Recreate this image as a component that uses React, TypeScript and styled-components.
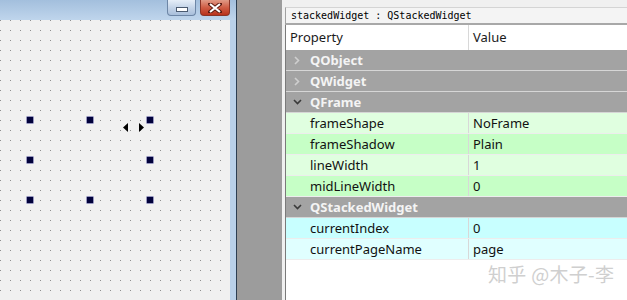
import React, { ReactElement } from "react"
import styled, { createGlobalStyle } from "styled-components"

const GlobalStyle = createGlobalStyle`
  html, body {
    margin: 0;
    padding: 0;
    width: 627px;
    height: 300px;
    overflow: hidden;
    background: #f0f0f0;
  }
  #root {
    width: 627px;
    height: 300px;
  }
`

const Screen = styled.div`
  display: flex;
  flex-flow: row nowrap;
  width: 627px;
  height: 300px;
  font-family: "Noto Sans", "Open Sans", sans-serif;
`

// ---- designer form window ----

const FormWindow = styled.div`
  display: flex;
  flex-direction: column;
  width: 236px;
  border-right: 1px solid #2c3e52;
  background: #b9d1ea;
`

const TitleBar = styled.div`
  display: flex;
  justify-content: flex-end;
  align-items: flex-start;
  gap: 4px;
  height: 20px;
  padding-right: 6px;
  background: linear-gradient(#a3bfdd, #bfd5ec);
`

const CaptionButton = styled.div<{ $close?: boolean }>`
  width: ${(p) => (p.$close ? 30 : 29)}px;
  height: 16px;
  box-sizing: border-box;
  border: 1px solid ${(p) => (p.$close ? "#8a3426" : "#6d86a6")};
  border-top: none;
  border-radius: 0 0 4px 4px;
  background: ${(p) =>
    p.$close
      ? "linear-gradient(#e09a86, #cf5d45 50%, #b8321c)"
      : "linear-gradient(#e6eef8, #c4d4e8 50%, #a9bfdb)"};
  display: flex;
  align-items: center;
  justify-content: center;
`

const MinGlyph = styled.div`
  width: 10px;
  height: 3px;
  background: #fff;
  border: 1px solid #4a5a70;
  margin-top: 3px;
`

const FrameBody = styled.div`
  flex: 1;
  display: flex;
  flex-direction: row;
`

const Canvas = styled.div`
  position: relative;
  width: 230px;
  background-color: #f0f0f0;
  background-image: conic-gradient(from 270deg at 1px 1px, #8e8e8e 90deg, transparent 0);
  background-size: 10px 10px;
  background-position: 0 0;
`

const FrameEdge = styled.div`
  flex: 1;
  background: #b9d1ea;
`

const Handle = styled.div`
  position: absolute;
  width: 6px;
  height: 6px;
  background: #00003a;
  box-shadow: 0 0 0 0.5px #3a3a8a;
`

const Cursor = styled.svg`
  position: absolute;
  left: 123px;
  top: 103px;
`

const Gutter = styled.div`
  width: 45px;
  background: #9c9c9c;
`

// ---- property editor ----

const Panel = styled.div`
  flex: 1;
  display: flex;
  flex-direction: column;
  padding: 7px 0 0 3px;
  background: #f0f0f0;
`

const Caption = styled.div`
  height: 15px;
  border-top: 1px solid #d4d4d4;
  border-bottom: 2px solid #a8a8a8;
  border-left: 1px solid #a0a0a0;
  padding-left: 5px;
  font-family: "DejaVu Sans Mono", "Liberation Mono", monospace;
  font-size: 10px;
  line-height: 15px;
  color: #000;
  background: #f4f4f4;
`

const Tree = styled.div`
  flex: 1;
  display: flex;
  flex-direction: column;
  background: #fff;
  border-left: 1px solid #7a7a7a;
`

const Row = styled.div<{ $bg: string; $line?: string }>`
  display: grid;
  grid-template-columns: 182px 1fr;
  height: 21px;
  box-sizing: border-box;
  background: ${(p) => p.$bg};
  border-bottom: 1px solid ${(p) => p.$line || "#ededed"};
  font-size: 13px;
  line-height: 20px;
  color: #111;
`

const HeaderRow = styled(Row)`
  height: 25px;
  line-height: 25px;
  border-bottom: none;
  color: #1a1a1a;
`

const Cell = styled.div<{ $indent?: number; $divider?: string }>`
  padding-left: ${(p) => p.$indent ?? 4}px;
  white-space: nowrap;
  overflow: hidden;
  & + & {
    border-left: 1px solid ${(p) => p.$divider || "#d8d8d8"};
  }
`

const GroupRow = styled.div`
  display: flex;
  align-items: center;
  height: 21px;
  box-sizing: border-box;
  background: #a3a3a3;
  border-bottom: 1px solid #d6d6d6;
  font-size: 13px;
  font-weight: 700;
  color: #f4f4f4;
`

const Chevron = styled.div`
  width: 24px;
  display: flex;
  justify-content: center;
  padding-right: 2px;
  box-sizing: border-box;
`

const Watermark = styled.div`
  position: absolute;
  left: 488px;
  top: 260px;
  font-family: "Noto Sans CJK SC", "Noto Sans", sans-serif;
  font-size: 19px;
  color: #cfcfcf;
  text-shadow: 0 0 2px #fff;
  letter-spacing: 0.3px;
`

const handles = [
  [30, 100], [90, 100], [150, 100],
  [30, 140], [150, 140],
  [30, 180], [90, 180], [150, 180],
]

type Prop = { name: string; value: string }
type Group = { title: string; open: boolean; colors?: [string, string]; props?: Prop[] }

const groups: Group[] = [
  { title: "QObject", open: false },
  { title: "QWidget", open: false },
  {
    title: "QFrame",
    open: true,
    colors: ["#e0ffe0", "#c6ffc6"],
    props: [
      { name: "frameShape", value: "NoFrame" },
      { name: "frameShadow", value: "Plain" },
      { name: "lineWidth", value: "1" },
      { name: "midLineWidth", value: "0" },
    ],
  },
  {
    title: "QStackedWidget",
    open: true,
    colors: ["#c8ffff", "#e0ffff"],
    props: [
      { name: "currentIndex", value: "0" },
      { name: "currentPageName", value: "page" },
    ],
  },
]

function ChevronIcon({ open }: { open: boolean }): ReactElement {
  return open ? (
    <svg width="9" height="6" viewBox="0 0 9 6">
      <polyline points="1,1 4.5,4.5 8,1" fill="none" stroke="#3a3a3a" strokeWidth="1.6" />
    </svg>
  ) : (
    <svg width="6" height="9" viewBox="0 0 6 9">
      <polyline points="1,1 4.5,4.5 1,8" fill="none" stroke="#cfcfcf" strokeWidth="1.6" />
    </svg>
  )
}

export default function App(): ReactElement {
  return (
    <Screen>
      <GlobalStyle />
      <FormWindow>
        <TitleBar>
          <CaptionButton>
            <MinGlyph />
          </CaptionButton>
          <CaptionButton $close>
            <svg width="14" height="10" viewBox="0 0 14 10">
              <path
                d="M2 1 L12 9 M12 1 L2 9"
                stroke="#5a1a10"
                strokeWidth="4"
                strokeLinecap="round"
              />
              <path d="M2 1 L12 9 M12 1 L2 9" stroke="#fff" strokeWidth="2.2" />
            </svg>
          </CaptionButton>
        </TitleBar>
        <FrameBody>
          <Canvas>
            {handles.map(([x, y]) => (
              <Handle key={`${x}-${y}`} style={{ left: x - 3, top: y - 3 }} />
            ))}
            <Cursor width="21" height="9" viewBox="0 0 21 9">
              <polygon points="0,4.5 5,0 5,9" fill="#000" />
              <polygon points="21,4.5 16,0 16,9" fill="#000" />
            </Cursor>
          </Canvas>
          <FrameEdge />
        </FrameBody>
      </FormWindow>
      <Gutter />
      <Panel>
        <Caption>stackedWidget : QStackedWidget</Caption>
        <Tree>
          <HeaderRow $bg="#fff">
            <Cell>Property</Cell>
            <Cell $divider="#e6e6e6">Value</Cell>
          </HeaderRow>
          {groups.map((g) => (
            <React.Fragment key={g.title}>
              <GroupRow>
                <Chevron>
                  <ChevronIcon open={g.open} />
                </Chevron>
                {g.title}
              </GroupRow>
              {g.props?.map((p, i) => (
                <Row key={p.name} $bg={g.colors![i % 2]}>
                  <Cell $indent={24}>{p.name}</Cell>
                  <Cell>{p.value}</Cell>
                </Row>
              ))}
            </React.Fragment>
          ))}
        </Tree>
      </Panel>
      <Watermark>知乎 @木子-李</Watermark>
    </Screen>
  )
}
